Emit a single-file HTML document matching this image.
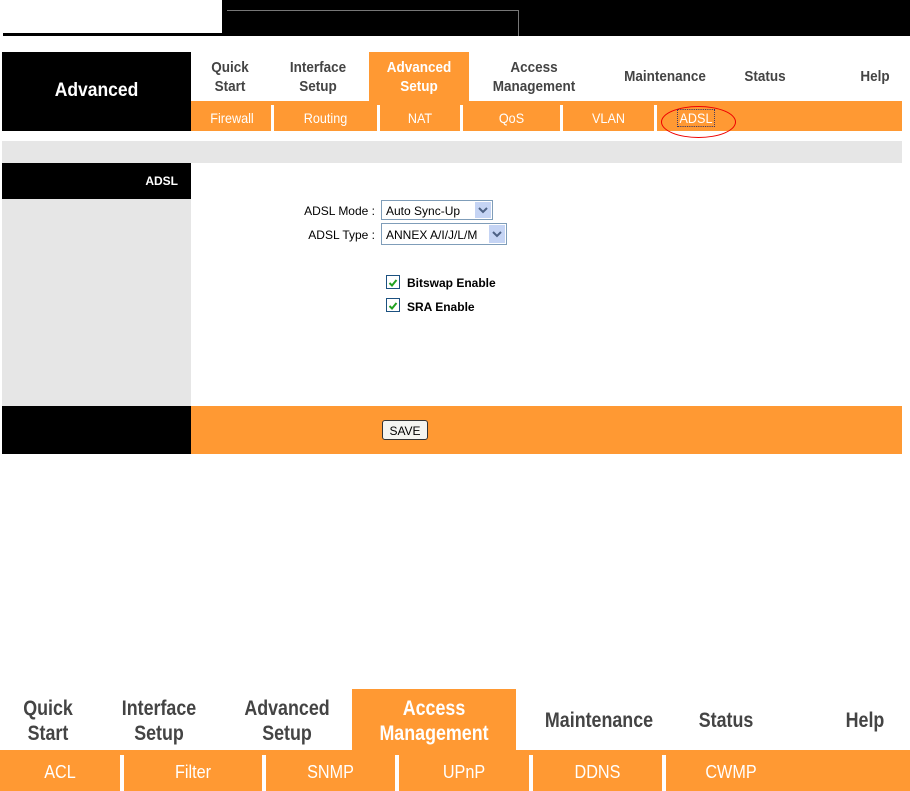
<!DOCTYPE html>
<html><head><style>
body{margin:0;width:910px;height:791px;background:#fff;position:relative;overflow:hidden;font-family:"Liberation Sans",Arial,sans-serif}
.a{position:absolute}
.tab{position:absolute;font-weight:bold;color:#444;font-size:15px;text-align:center;line-height:19px;transform:scaleX(0.9)}
.sub{position:absolute;color:#fff;font-size:14px;text-align:center;transform:scaleX(0.9)}
.sep{position:absolute;background:#fff;width:3px}
.sel{position:absolute;background:#fff;border:1px solid #7f9db9;font-size:12px;height:20px;line-height:20px;padding-left:4px;box-sizing:border-box}
.arr{position:absolute;right:1px;top:1px;width:16px;height:16px;background:#c5d4f4}
.cb{position:absolute;width:12px;height:12px;border:1px solid #1c5180;background:#fff}
</style></head><body>
<div class="a" style="left:222px;top:0;width:688px;height:36px;background:#000"></div>
<div class="a" style="left:227px;top:10px;width:291px;height:1px;background:#777"></div>
<div class="a" style="left:518px;top:10px;width:1px;height:26px;background:#777"></div>
<div class="a" style="left:3px;top:33px;width:220px;height:3px;background:#000"></div>

<div class="a" style="left:2px;top:52px;width:189px;height:79px;background:#000"></div>
<div class="a" style="left:2px;top:80px;width:189px;color:#fff;font-size:19px;font-weight:bold;text-align:center;transform:scaleX(0.92)">Advanced</div>
<div class="a" style="left:369px;top:52px;width:100px;height:50px;background:#f93"></div>
<div class="a" style="left:191px;top:101px;width:711px;height:30px;background:#f93"></div>
<div class="tab" style="left:200px;top:58px;width:60px">Quick<br>Start</div>
<div class="tab" style="left:273px;top:58px;width:90px">Interface<br>Setup</div>
<div class="tab" style="left:369px;top:58px;width:100px;color:#fff">Advanced<br>Setup</div>
<div class="tab" style="left:474px;top:58px;width:120px">Access<br>Management</div>
<div class="tab" style="left:605px;top:67px;width:120px">Maintenance</div>
<div class="tab" style="left:730px;top:67px;width:70px">Status</div>
<div class="tab" style="left:845px;top:67px;width:60px">Help</div>
<div class="sep" style="left:271px;top:105px;height:26px"></div>
<div class="sep" style="left:377px;top:105px;height:26px"></div>
<div class="sep" style="left:460px;top:105px;height:26px"></div>
<div class="sep" style="left:560px;top:105px;height:26px"></div>
<div class="sep" style="left:654px;top:105px;height:26px"></div>
<div class="sub" style="left:196px;top:110px;width:72px">Firewall</div>
<div class="sub" style="left:274px;top:110px;width:103px">Routing</div>
<div class="sub" style="left:380px;top:110px;width:80px">NAT</div>
<div class="sub" style="left:463px;top:110px;width:97px">QoS</div>
<div class="sub" style="left:563px;top:110px;width:91px">VLAN</div>
<div class="sub" style="left:676px;top:110px;width:40px;outline:1px dotted #336;">ADSL</div>
<div class="a" style="left:661px;top:106px;width:73px;height:30px;border:1px solid #e00;border-radius:50%"></div>

<div class="a" style="left:2px;top:141px;width:900px;height:22px;background:#e6e6e6"></div>
<div class="a" style="left:2px;top:163px;width:189px;height:36px;background:#000"></div>
<div class="a" style="left:2px;top:174px;width:176px;text-align:right;color:#fff;font-size:12px;font-weight:bold">ADSL</div>
<div class="a" style="left:2px;top:199px;width:189px;height:207px;background:#e6e6e6"></div>
<div class="a" style="left:2px;top:406px;width:189px;height:48px;background:#000"></div>
<div class="a" style="left:191px;top:406px;width:711px;height:48px;background:#f93"></div>

<div class="a" style="left:290px;top:204px;width:85px;text-align:right;font-size:12px">ADSL Mode :</div>
<div class="a" style="left:290px;top:228px;width:85px;text-align:right;font-size:12px">ADSL Type :</div>
<div class="sel" style="left:381px;top:200px;width:112px">Auto Sync-Up<div class="arr"><svg width="16" height="16"><path d="M4 6 L8 10 L12 6" stroke="#4d6185" stroke-width="2" fill="none"/></svg></div></div>
<div class="sel" style="left:381px;top:223px;width:126px;height:22px;line-height:22px">ANNEX A/I/J/L/M<div class="arr" style="height:18px"><svg width="16" height="18"><path d="M4 7 L8 11 L12 7" stroke="#4d6185" stroke-width="2" fill="none"/></svg></div></div>
<div class="cb" style="left:386px;top:275px"><svg width="12" height="12"><path d="M2.5 6 L5 8.5 L9.5 3" stroke="#21a121" stroke-width="2" fill="none"/></svg></div>
<div class="cb" style="left:386px;top:298px"><svg width="12" height="12"><path d="M2.5 6 L5 8.5 L9.5 3" stroke="#21a121" stroke-width="2" fill="none"/></svg></div>
<div class="a" style="left:407px;top:276px;font-size:12px;font-weight:bold">Bitswap Enable</div>
<div class="a" style="left:407px;top:300px;font-size:12px;font-weight:bold">SRA Enable</div>
<div class="a" style="left:382px;top:420px;width:46px;height:20px;border:1px solid #333;border-radius:3px;background:#f4f4f0;font-size:12px;text-align:center;line-height:20px;box-sizing:border-box">SAVE</div>

<div class="a" style="left:352px;top:689px;width:164px;height:62px;background:#f93"></div>
<div class="a" style="left:0;top:750px;width:910px;height:41px;background:#f93"></div>
<div class="tab" style="left:8px;top:696px;width:80px;font-size:21px;line-height:25px;transform:scaleX(0.85)">Quick<br>Start</div>
<div class="tab" style="left:104px;top:696px;width:110px;font-size:21px;line-height:25px;transform:scaleX(0.85)">Interface<br>Setup</div>
<div class="tab" style="left:232px;top:696px;width:110px;font-size:21px;line-height:25px;transform:scaleX(0.85)">Advanced<br>Setup</div>
<div class="tab" style="left:352px;top:696px;width:164px;font-size:21px;line-height:25px;color:#fff;transform:scaleX(0.85)">Access<br>Management</div>
<div class="tab" style="left:524px;top:708px;width:150px;font-size:21px;line-height:25px;transform:scaleX(0.85)">Maintenance</div>
<div class="tab" style="left:686px;top:708px;width:80px;font-size:21px;line-height:25px;transform:scaleX(0.85)">Status</div>
<div class="tab" style="left:835px;top:708px;width:60px;font-size:21px;line-height:25px;transform:scaleX(0.85)">Help</div>
<div class="sep" style="left:120px;top:755px;height:36px;width:4px"></div>
<div class="sep" style="left:262px;top:755px;height:36px;width:4px"></div>
<div class="sep" style="left:395px;top:755px;height:36px;width:4px"></div>
<div class="sep" style="left:529px;top:755px;height:36px;width:4px"></div>
<div class="sep" style="left:662px;top:755px;height:36px;width:4px"></div>
<div class="sub" style="left:0;top:762px;width:120px;font-size:18px">ACL</div>
<div class="sub" style="left:124px;top:762px;width:138px;font-size:18px">Filter</div>
<div class="sub" style="left:266px;top:762px;width:129px;font-size:18px">SNMP</div>
<div class="sub" style="left:399px;top:762px;width:130px;font-size:18px">UPnP</div>
<div class="sub" style="left:533px;top:762px;width:129px;font-size:18px">DDNS</div>
<div class="sub" style="left:666px;top:762px;width:130px;font-size:18px">CWMP</div>
</body></html>
